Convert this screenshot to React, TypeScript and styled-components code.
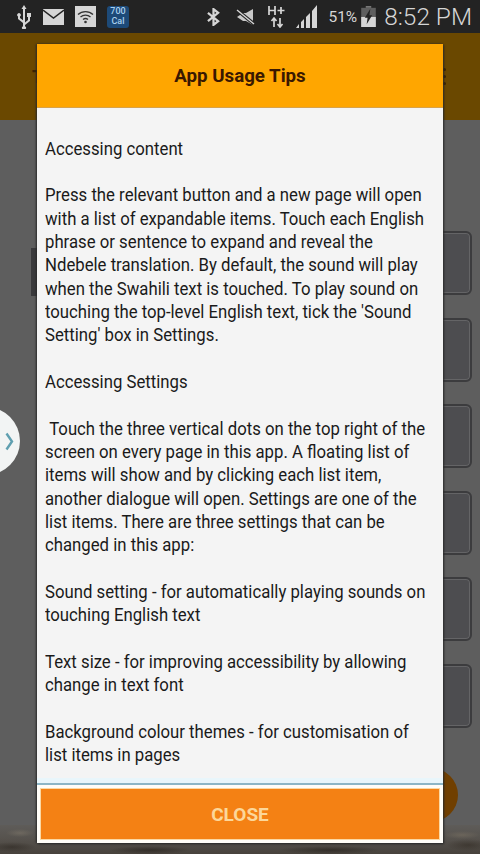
import React from 'react';
import styled, { createGlobalStyle } from 'styled-components';

const Global = createGlobalStyle`
  html, body {
    margin: 0;
    padding: 0;
    background: #5e5e5e;
  }
  #root {
    height: 854px;
  }
`;

const Page = styled.div`
  position: relative;
  width: 480px;
  height: 854px;
  overflow: hidden;
  display: flex;
  flex-direction: column;
  background: #5e5e5e;
  font-family: Roboto, 'Liberation Sans', sans-serif;
`;

const StatusBar = styled.div`
  height: 33px;
  flex: none;
  background: #232323;
  display: flex;
  align-items: center;
  color: #d6d6d6;
  padding: 0 8px 0 16px;
  box-sizing: border-box;
`;

const StatusLeft = styled.div`
  display: flex;
  align-items: center;
  gap: 11px;
`;

const StatusRight = styled.div`
  margin-left: auto;
  display: flex;
  align-items: center;
`;

const CalBadge = styled.div`
  width: 22px;
  height: 22px;
  border-radius: 3px;
  background: #1d4a78;
  color: #a9d0ee;
  font-size: 9px;
  line-height: 9.5px;
  font-weight: 500;
  text-align: center;
  display: flex;
  flex-direction: column;
  justify-content: center;
`;

const Percent = styled.span`
  font-size: 15.5px;
  margin: 0 4px 0 10px;
  white-space: nowrap;
`;

const Clock = styled.span`
  font-size: 24.400px;
  font-weight: 300;
  margin-left: 8px;
  white-space: nowrap;
`;

const IconGap = styled.span<{ $left: number }>`
  display: flex;
  margin-left: ${(p) => p.$left}px;
`;

const AppBar = styled.div`
  height: 87px;
  flex: none;
  background: #6a4800;
  display: flex;
  align-items: center;
  justify-content: space-between;
  padding: 0 34px 0 32px;
  color: #3a2200;
  font-size: 18px;
  font-weight: 700;
`;

const MenuDots = styled.div`
  display: flex;
  flex-direction: column;
  gap: 4px;
`;

const MenuDot = styled.span`
  width: 3px;
  height: 3px;
  border-radius: 50%;
  background: #3a2200;
`;

const Body = styled.div`
  flex: 1;
  padding: 111px 8px 0 60px;
  display: flex;
  flex-direction: column;
  gap: 22.600px;
`;

const BackButton = styled.div`
  height: 64px;
  flex: none;
  box-sizing: border-box;
  border: 2px solid #3c3c3e;
  border-radius: 6px;
  background: #4d4d50;
  box-shadow: inset 0 0 0 1px #646466;
`;

const LeftStrip = styled.div`
  position: absolute;
  left: 31px;
  top: 248px;
  width: 8px;
  height: 48px;
  background: #3a3a3c;
`;

const Ground = styled.div`
  position: absolute;
  left: 0;
  right: 0;
  bottom: 0;
  height: 29px;
  background:
    radial-gradient(ellipse 14px 4px at 20px 8px, rgba(130, 122, 108, 0.5), transparent),
    radial-gradient(ellipse 18px 4px at 462px 10px, rgba(125, 115, 100, 0.5), transparent),
    radial-gradient(ellipse 24px 5px at 12px 22px, rgba(40, 34, 28, 0.5), transparent),
    radial-gradient(ellipse 40px 4px at 150px 25px, rgba(35, 30, 25, 0.6), transparent),
    radial-gradient(ellipse 50px 4px at 330px 25px, rgba(35, 30, 25, 0.6), transparent),
    radial-gradient(ellipse 22px 6px at 468px 20px, rgba(45, 38, 30, 0.5), transparent),
    linear-gradient(180deg, #5e5c59 0%, #57534e 45%, #47423c 100%);
`;

const SideTab = styled.div`
  position: absolute;
  left: -48px;
  top: 407px;
  width: 68px;
  height: 68px;
  border-radius: 50%;
  background: #f2f4f4;
  display: flex;
  align-items: center;
  justify-content: flex-end;
  padding-right: 6px;
  box-sizing: border-box;
`;

const Fab = styled.div`
  position: absolute;
  left: 404px;
  top: 768px;
  width: 54px;
  height: 54px;
  border-radius: 50%;
  background: #703f00;
`;

const Dialog = styled.div`
  position: absolute;
  left: 37px;
  top: 44px;
  width: 406px;
  height: 799px;
  display: flex;
  flex-direction: column;
  background: #f4f4f4;
  box-shadow: -1px 0 2px #2a2a2a, 1px 1px 2px #2a2a2a;
`;

const DialogHeader = styled.div`
  height: 63px;
  flex: none;
  background: #ffa600;
  border-bottom: 1px solid #d8a24a;
  display: flex;
  align-items: center;
  justify-content: center;
  color: #3a1800;
  font-size: 18.700px;
  font-weight: 700;
`;

const DialogBody = styled.div`
  flex: 1;
  padding: 28.500px 8px 0 8px;
  color: #1a1a1a;
  font-size: 18px;
  line-height: 23.350px;
  box-shadow: inset 0 -5px 0 #e9f6fb;
`;

const Line = styled.div`
  width: fit-content;
  white-space: nowrap;
  min-height: 23.350px;
  transform: scaleX(0.93);
  transform-origin: left center;
`;

const DialogFoot = styled.div`
  flex: none;
  background: #fffdf8;
  border-top: 2px solid #8db6c6;
  padding: 3px;
`;

const CloseButton = styled.div`
  height: 52px;
  box-sizing: border-box;
  background: #f48114;
  border: 1px solid #fbd9a4;
  display: flex;
  align-items: center;
  justify-content: center;
  color: #fcd79a;
  font-size: 19px;
  font-weight: 700;
`;

const lines = [
  'Accessing content',
  '',
  'Press the relevant button and a new page will open',
  'with a list of expandable items. Touch each English',
  'phrase or sentence to expand and reveal the',
  'Ndebele translation. By default, the sound will play',
  'when the Swahili text is touched. To play sound on',
  "touching the top-level English text, tick the 'Sound",
  "Setting' box in Settings.",
  '',
  'Accessing Settings',
  '',
  '\u00a0Touch the three vertical dots on the top right of the',
  'screen on every page in this app. A floating list of',
  'items will show and by clicking each list item,',
  'another dialogue will open. Settings are one of the',
  'list items. There are three settings that can be',
  'changed in this app:',
  '',
  'Sound setting - for automatically playing sounds on',
  'touching English text',
  '',
  'Text size - for improving accessibility by allowing',
  'change in text font',
  '',
  'Background colour themes - for customisation of',
  'list items in pages',
];

function StatusIcons() {
  return (
    <StatusLeft>
      <svg width="16" height="24" viewBox="0 0 16 24" fill="#d6d6d6">
        <path d="M8 0l2.500 4H9v13.500l3-2.500v-3h-1V8h4v4h-1v4l-5 4v1.200a2 2 0 1 1-2 0V18l-5-4v-2.600a1.800 1.800 0 1 1 2 0V13l3 2.300V4H5.500z" />
      </svg>
      <svg width="21" height="16" viewBox="0 0 21 16">
        <rect width="21" height="16" fill="#d6d6d6" />
        <path d="M0 1l10.500 8L21 1" fill="none" stroke="#232323" strokeWidth="1.400" />
      </svg>
      <svg width="21" height="21" viewBox="0 0 21 21">
        <rect width="21" height="21" fill="#d6d6d6" />
        <path d="M3 8.500a11 11 0 0 1 15 0M5.500 11a7.500 7.500 0 0 1 10 0M8 13.500a4 4 0 0 1 5 0" fill="none" stroke="#333" strokeWidth="1.300" />
        <circle cx="10.500" cy="16" r="1.300" fill="#333" />
      </svg>
      <CalBadge>
        <span>700</span>
        <span>Cal</span>
      </CalBadge>
    </StatusLeft>
  );
}

function StatusInfo() {
  return (
    <StatusRight>
      <svg width="13" height="18" viewBox="0 0 14 19" fill="none" stroke="#d6d6d6" strokeWidth="2.400">
        <path d="M1 5l11 9-5 4V1l5 4L1 14" />
      </svg>
      <IconGap $left={16}>
        <svg width="19" height="18" viewBox="0 0 19 18">
          <path d="M17 1v16l-7-4H7L1 9l6-4h3z" fill="#c9c9c9" />
          <path d="M1 2l17 14" stroke="#232323" strokeWidth="3.500" />
          <path d="M1 2l17 14" stroke="#d6d6d6" strokeWidth="1.400" />
        </svg>
      </IconGap>
      <IconGap $left={13}>
        <svg width="17" height="23" viewBox="0 0 17 23" fill="none" stroke="#d6d6d6" strokeWidth="1.700">
          <path d="M1 1v9M7 1v9M1 5.500h6M13 2v7M9.500 5.500h7M6 13v9M3.500 16l2.500-3 2.500 3M12 13v9M9.500 19l2.500 3 2.500-3" />
        </svg>
      </IconGap>
      <IconGap $left={11}>
        <svg width="22" height="23" viewBox="0 0 22 23" fill="#d6d6d6">
          <path d="M0 23l3-4v4zM5 23v-6l3-3v9zM10 23V12l4-4v15zM16 23V6l5-6v23z" />
        </svg>
      </IconGap>
      <Percent>51%</Percent>
      <svg width="15" height="21" viewBox="0 0 16 23">
        <rect x="5" y="0" width="6" height="2" fill="#777" />
        <rect x="0" y="2" width="16" height="21" fill="#5f5f5f" />
        <rect x="0" y="12" width="16" height="11" fill="#d6d6d6" />
        <path d="M10 3L4 13h3l-1 7 6-10H9z" fill="#232323" />
      </svg>
      <Clock>8:52 PM</Clock>
    </StatusRight>
  );
}

export default function App() {
  return (
    <Page>
      <Global />
      <StatusBar>
        <StatusIcons />
        <StatusInfo />
      </StatusBar>
      <AppBar>
        <span>T</span>
        <MenuDots>
          <MenuDot />
          <MenuDot />
          <MenuDot />
        </MenuDots>
      </AppBar>
      <Body>
        {[0, 1, 2, 3, 4, 5].map((i) => (
          <BackButton key={i} />
        ))}
      </Body>
      <LeftStrip />
      <Ground />
      <SideTab>
        <svg width="9" height="19" viewBox="0 0 9 19" fill="none" stroke="#5f9fb0" strokeWidth="2.400">
          <path d="M1.500 1.500L7 9.500l-5.500 8" />
        </svg>
      </SideTab>
      <Fab />
      <Dialog>
        <DialogHeader>App Usage Tips</DialogHeader>
        <DialogBody>
          {lines.map((line, i) => (
            <Line key={i}>{line}</Line>
          ))}
        </DialogBody>
        <DialogFoot>
          <CloseButton>CLOSE</CloseButton>
        </DialogFoot>
      </Dialog>
    </Page>
  );
}
